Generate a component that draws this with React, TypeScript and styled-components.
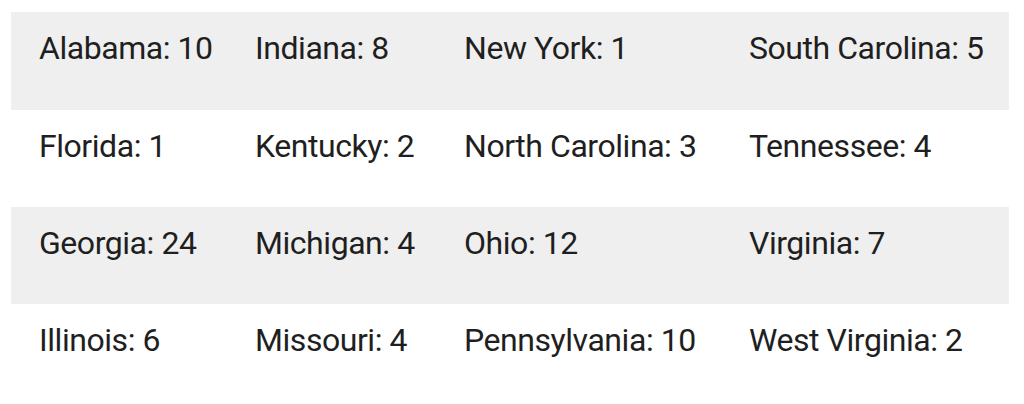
import React from 'react';
import styled, { createGlobalStyle } from 'styled-components';

const GlobalStyle = createGlobalStyle`
  html, body {
    margin: 0;
    background: #ffffff;
  }
`;

const Page = styled.div`
  padding: 12px 15px 0 11px;
`;

const Table = styled.div`
  display: grid;
  grid-template-columns: 216px 209px 285px 288px;
  grid-template-rows: 98px 97px 97px 97px;
  width: 998px;
`;

const Row = styled.div<{ $shaded: boolean }>`
  display: contents;

  & > div {
    background: ${(p) => (p.$shaded ? '#efefef' : '#ffffff')};
  }
`;

const Cell = styled.div`
  box-sizing: border-box;
  padding: 20px 0 0 28px;
  font-family: Roboto, 'Liberation Sans', sans-serif;
  font-size: 32px;
  line-height: 33px;
  letter-spacing: -0.45px;
  color: #1f1f1f;
  white-space: nowrap;
`;

const rows: [string, number][][] = [
  [['Alabama', 10], ['Indiana', 8], ['New York', 1], ['South Carolina', 5]],
  [['Florida', 1], ['Kentucky', 2], ['North Carolina', 3], ['Tennessee', 4]],
  [['Georgia', 24], ['Michigan', 4], ['Ohio', 12], ['Virginia', 7]],
  [['Illinois', 6], ['Missouri', 4], ['Pennsylvania', 10], ['West Virginia', 2]],
];

const App = () => {
  return (
    <Page>
      <GlobalStyle />
      <Table>
        {rows.map((row, i) => (
          <Row key={i} $shaded={i % 2 === 0}>
            {row.map(([state, count]) => (
              <Cell key={state}>
                {state}: {count}
              </Cell>
            ))}
          </Row>
        ))}
      </Table>
    </Page>
  );
};

export default App;
